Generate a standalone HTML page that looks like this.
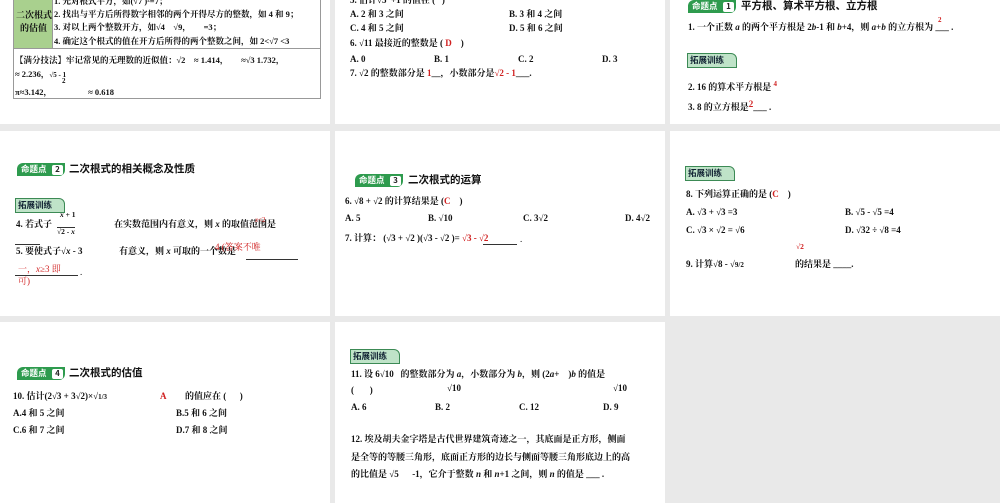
<!DOCTYPE html>
<html><head><meta charset="utf-8"><style>
body{margin:0;width:1000px;height:503px;background:#e9e9e9;position:relative;overflow:hidden;font-family:"Liberation Serif","Noto Serif CJK SC","Noto Sans CJK SC",serif;font-size:9px;color:#111}
.c{position:absolute;background:#fff}
.t{position:absolute;white-space:nowrap;line-height:1}
.b{font-weight:bold}
.r{color:#d02020}
.badge{position:absolute;height:13px;width:48px;background:#2e9b4e;color:#fff;font-family:"Noto Sans CJK SC",sans-serif;font-size:8.5px;line-height:13px;padding-left:4px;box-sizing:border-box;border-radius:6px 0 6px 0;font-weight:bold}
.badge i{position:absolute;right:2px;top:1.5px;width:11px;height:10px;background:#fff;color:#222;font-style:normal;font-size:8px;line-height:10px;text-align:center;border-radius:2px}
.h{font-family:"Noto Sans CJK SC",sans-serif;font-weight:bold;font-size:10.5px}
.tz{position:absolute;width:46px;height:13px;background:#bfe3c8;border:1px solid #3c8a55;border-radius:0 6px 0 0;font-family:"Noto Sans CJK SC",sans-serif;font-weight:bold;font-size:8.5px;line-height:13px;padding-left:2px;color:#123}
.ln{position:absolute;border-bottom:0.8px solid #333}
</style></head><body>
<!-- row1 -->
<div class="c" style="left:0;top:0;width:330px;height:124px">
 <div style="position:absolute;left:13px;top:-1px;width:306px;height:98px;border:1px solid #999"></div>
 <div style="position:absolute;left:14px;top:0;width:38px;height:48px;background:#a9d08e"></div>
 <div style="position:absolute;left:14px;top:48px;width:306px;border-top:1px solid #999"></div>
 <div style="position:absolute;left:52px;top:0;height:48px;border-left:1px solid #999"></div>
 <div class="t b" style="left:16px;top:11px">二次根式</div>
 <div class="t b" style="left:20px;top:24px">的估值</div>
 <div class="t b" style="left:54px;top:-3px;font-size:8.5px">1. 先对根式平方，如(√7 )²=7；</div>
 <div class="t b" style="left:54px;top:10px;font-size:8.5px">2. 找出与平方后所得数字相邻的两个开得尽方的整数，如 4 和 9；</div>
 <div class="t b" style="left:54px;top:23px;font-size:8.5px">3. 对以上两个整数开方，如√4 &nbsp;&nbsp;&nbsp;√9， &nbsp;&nbsp;&nbsp;&nbsp;&nbsp;=3；</div>
 <div class="t b" style="left:54px;top:37px;font-size:8.5px">4. 确定这个根式的值在开方后所得的两个整数之间，如 2&lt;√7 &lt;3</div>
 <div class="t b" style="left:15px;top:56px;font-size:8.5px">【满分技法】牢记常见的无理数的近似值：√2 &nbsp;&nbsp;&nbsp;≈ 1.414， &nbsp;&nbsp;&nbsp;&nbsp;&nbsp;≈√3 1.732，</div>
 <div class="t b" style="left:15px;top:70px;font-size:8.5px">≈ 2.236，<span style="font-size:7px">√5 - 1</span></div>
 <div class="t b" style="left:62px;top:78px;font-size:7px">2</div>
 <div class="t b" style="left:15px;top:88px;font-size:8.5px">π≈3.142， &nbsp;&nbsp;&nbsp;&nbsp;&nbsp;&nbsp;&nbsp;&nbsp;&nbsp;&nbsp;&nbsp;&nbsp;&nbsp;&nbsp;&nbsp;&nbsp;≈ 0.618</div>
</div>
<div class="c" style="left:335px;top:0;width:330px;height:124px">
 <div class="t b" style="left:15px;top:-4px">5. 估计√5 &nbsp;+1 的值在 ( &nbsp;&nbsp;)</div>
 <div class="t b" style="left:15px;top:10px">A. 2 和 3 之间</div><div class="t b" style="left:174px;top:10px">B. 3 和 4 之间</div>
 <div class="t b" style="left:15px;top:24px">C. 4 和 5 之间</div><div class="t b" style="left:174px;top:24px">D. 5 和 6 之间</div>
 <div class="t b" style="left:15px;top:39px">6. √11 最接近的整数是 ( <span class="r">D</span> &nbsp;&nbsp;&nbsp;)</div>
 <div class="t b" style="left:15px;top:55px">A. 0</div><div class="t b" style="left:99px;top:55px">B. 1</div><div class="t b" style="left:183px;top:55px">C. 2</div><div class="t b" style="left:267px;top:55px">D. 3</div>
 <div class="t b" style="left:15px;top:69px">7. √2 的整数部分是 <span class="r">1</span>__，小数部分是<span class="r">√2 - 1</span>___.</div>
</div>
<div class="c" style="left:670px;top:0;width:330px;height:124px">
 <div class="badge" style="left:18px;top:0">命题点<i>1</i></div>
 <div class="t h" style="left:71px;top:1px">平方根、算术平方根、立方根</div>
 <div class="t b" style="left:18px;top:23px">1. 一个正数 <i>a</i> 的两个平方根是 2<i>b</i>-1 和 <i>b</i>+4，则 <i>a</i>+<i>b</i> 的立方根为 ___ .</div>
 <div class="t r b" style="left:268px;top:17px;font-size:7px">2</div>
 <div class="tz" style="left:17px;top:53px">拓展训练</div>
 <div class="t b" style="left:18px;top:81px">2. 16 的算术平方根是 <span class="r" style="vertical-align:4px;font-size:7px">4</span></div>
 <div class="t b" style="left:18px;top:100px">3. 8 的立方根是<span class="r" style="vertical-align:3px">2</span>___ .</div>
</div>
<!-- row2 -->
<div class="c" style="left:0;top:131px;width:330px;height:185px">
 <div class="badge" style="left:17px;top:32px">命题点<i>2</i></div>
 <div class="t h" style="left:69px;top:33px">二次根式的相关概念及性质</div>
 <div class="tz" style="left:15px;top:67px">拓展训练</div>
 <div class="t b" style="left:60px;top:80px;font-size:7.5px"><i>x</i> + 1</div>
 <div class="t b" style="left:16px;top:89px">4. 若式子</div>
 <div class="t b" style="left:57px;top:96px;font-size:7.5px;border-top:0.8px solid #333">√2 - <i>x</i></div>
 <div class="t b" style="left:114px;top:89px">在实数范围内有意义，则 <i>x</i> 的取值范围是</div>
 <div class="t r" style="left:255px;top:86px;font-size:7px"><i>x</i>&lt;2</div>
 <div class="ln" style="left:15px;top:113px;width:25px"></div>
 <div class="t b" style="left:16px;top:116px">5. 要使式子√<i>x</i> - 3</div>
 <div class="t b" style="left:119px;top:116px">有意义，则 <i>x</i> 可取的一个数是</div>
 <div class="t r" style="left:215px;top:112px">4 (答案不唯</div>
 <div class="ln" style="left:246px;top:128px;width:52px"></div>
 <div class="t r" style="left:18px;top:134px">一，<i>x</i>≥3 即</div>
 <div class="ln" style="left:15px;top:144px;width:63px"></div>
 <div class="t" style="left:80px;top:137px">.</div>
 <div class="t r" style="left:18px;top:146px">可)</div>
</div>
<div class="c" style="left:335px;top:131px;width:330px;height:185px">
 <div class="badge" style="left:20px;top:43px">命题点<i>3</i></div>
 <div class="t h" style="left:73px;top:44px">二次根式的运算</div>
 <div class="t b" style="left:10px;top:66px">6. √8 + √2 的计算结果是 (<span class="r">C</span> &nbsp;&nbsp;&nbsp;)</div>
 <div class="t b" style="left:10px;top:83px">A. 5</div><div class="t b" style="left:93px;top:83px">B. √10</div><div class="t b" style="left:188px;top:83px">C. 3√2</div><div class="t b" style="left:290px;top:83px">D. 4√2</div>
 <div class="t b" style="left:10px;top:103px">7. 计算： (√3 + √2 )(√3 - √2 )= <span class="r">√3 - √2</span></div>
 <div class="ln" style="left:148px;top:113px;width:34px"></div>
 <div class="t" style="left:185px;top:104px">.</div>
</div>
<div class="c" style="left:670px;top:131px;width:330px;height:185px">
 <div class="tz" style="left:15px;top:35px">拓展训练</div>
 <div class="t b" style="left:16px;top:59px">8. 下列运算正确的是 (<span class="r">C</span> &nbsp;&nbsp;&nbsp;)</div>
 <div class="t b" style="left:16px;top:77px">A. √3 + √3 =3</div><div class="t b" style="left:175px;top:77px">B. √5 - √5 =4</div>
 <div class="t b" style="left:16px;top:95px">C. √3 × √2 = √6</div><div class="t b" style="left:175px;top:95px">D. √32 ÷ √8 =4</div>
 <div class="t r b" style="left:126px;top:112px;font-size:7.5px">√2</div>
 <div class="t b" style="left:16px;top:129px">9. 计算√8 - √<span style="font-size:7px">9/2</span></div>
 <div class="t b" style="left:125px;top:129px">的结果是 ____.</div>
</div>
<!-- row3 -->
<div class="c" style="left:0;top:322px;width:330px;height:181px">
 <div class="badge" style="left:17px;top:45px">命题点<i>4</i></div>
 <div class="t h" style="left:69px;top:46px">二次根式的估值</div>
 <div class="t b" style="left:13px;top:70px">10. 估计(2√3 + 3√2)×√<span style="font-size:7px">1/3</span></div>
 <div class="t r b" style="left:160px;top:70px">A</div>
 <div class="t b" style="left:185px;top:70px">的值应在 ( &nbsp;&nbsp;&nbsp;&nbsp;&nbsp;)</div>
 <div class="t b" style="left:13px;top:87px">A.4 和 5 之间</div><div class="t b" style="left:176px;top:87px">B.5 和 6 之间</div>
 <div class="t b" style="left:13px;top:104px">C.6 和 7 之间</div><div class="t b" style="left:176px;top:104px">D.7 和 8 之间</div>
</div>
<div class="c" style="left:335px;top:322px;width:330px;height:181px">
 <div class="tz" style="left:15px;top:27px">拓展训练</div>
 <div class="t b" style="left:16px;top:48px">11. 设 6√10 &nbsp;&nbsp;的整数部分为 <i>a</i>，小数部分为 <i>b</i>，则 (2<i>a</i>+ &nbsp;&nbsp;&nbsp;)<i>b</i> 的值是</div>
 <div class="t b" style="left:16px;top:64px">( &nbsp;&nbsp;&nbsp;&nbsp;&nbsp;&nbsp;)</div>
 <div class="t b" style="left:112px;top:62px">√10</div><div class="t b" style="left:278px;top:62px">√10</div>
 <div class="t b" style="left:16px;top:81px">A. 6</div><div class="t b" style="left:100px;top:81px">B. 2</div><div class="t b" style="left:184px;top:81px">C. 12</div><div class="t b" style="left:268px;top:81px">D. 9</div>
 <div class="t b" style="left:16px;top:113px">12. 埃及胡夫金字塔是古代世界建筑奇迹之一，其底面是正方形，侧面</div>
 <div class="t b" style="left:16px;top:131px">是全等的等腰三角形，底面正方形的边长与侧面等腰三角形底边上的高</div>
 <div class="t b" style="left:16px;top:148px">的比值是 √5 &nbsp;&nbsp;&nbsp;&nbsp;&nbsp;-1，它介于整数 <i>n</i> 和 <i>n</i>+1 之间，则 <i>n</i> 的值是 ___ .</div>
</div>
</body></html>
